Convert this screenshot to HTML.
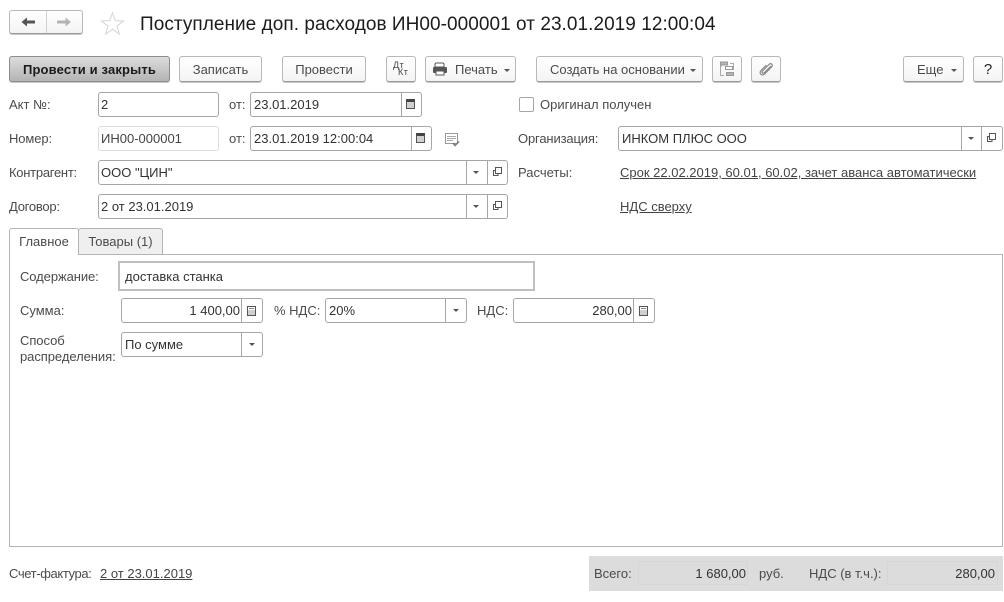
<!DOCTYPE html>
<html><head><meta charset="utf-8">
<style>
html,body{margin:0;padding:0;background:#fff;width:1004px;height:602px;overflow:hidden}
body{position:relative;font:13px/14px "Liberation Sans",Arial,sans-serif;color:#4b4b4b}
.a{position:absolute;white-space:nowrap}
.btn{position:absolute;box-sizing:border-box;top:56px;height:26px;border:1px solid #b8b8b8;border-bottom-color:#9a9a9a;border-radius:3px;background:linear-gradient(#fff,#f4f4f4);box-shadow:0 1px 0 #c8c8c8;text-align:center;line-height:26px;color:#4b4b4b;white-space:nowrap}
.f{position:absolute;box-sizing:border-box;height:25px;border:1px solid #a6a6a6;border-radius:3px;background:#fff;line-height:23px;padding-left:3px;color:#333;white-space:nowrap}
.d{position:absolute;top:0;bottom:0;width:1px;background:#a6a6a6}
.t{position:absolute;width:0;height:0;border-left:3px solid transparent;border-right:3px solid transparent;border-top:3px solid #555}
.l{color:#4b4b4b}
u{color:#444}
.cal{position:absolute;width:7px;height:6px;border:1px solid #555;border-top:3px solid #444;background-color:#fff;background-image:radial-gradient(#555 .6px,transparent .8px);background-size:2px 2px}
.calc{position:absolute;width:7px;height:8px;border:1px solid #555;background-color:#fff;background-image:linear-gradient(#fff 3px,transparent 3px),radial-gradient(#555 .6px,transparent .8px);background-size:100% 100%,2px 2px}
.calc:before{content:"";position:absolute;left:1px;right:1px;top:1px;height:1px;background:#888}
</style></head><body>

<!-- nav -->
<div class="btn" style="left:9px;top:10px;width:74px;height:24px"></div>
<div class="a" style="left:46px;top:11px;width:1px;height:22px;background:#d0d0d0"></div>
<svg class="a" style="left:20px;top:15px" width="60" height="14"><path d="M1.500 7 L7 2.500 V5.500 H15 V8.500 H7 V11.500Z" fill="#555"/><path d="M51 7 L45.500 2.500 V5.500 H37 V8.500 H45.500 V11.500Z" fill="#b4b4b4"/></svg>
<svg class="a" style="left:100px;top:11px" width="25" height="24"><path d="M12.500 2 L15.300 9.600 L23.500 10 L17 15 L19.300 23 L12.500 18.400 L5.700 23 L8 15 L1.500 10 L9.700 9.600Z" fill="#fff" stroke="#d4d4d4"/></svg>
<div class="a" style="left:140px;top:14px;font-size:19px;line-height:21px;letter-spacing:.05px;color:#1c1c1c">Поступление доп. расходов ИН00-000001 от 23.01.2019 12:00:04</div>

<!-- toolbar -->
<div class="btn" style="left:9px;width:161px;background:linear-gradient(#dcdcdc,#b4b4b4);border-color:#8c8c8c;color:#1a1a1a;font-weight:bold;letter-spacing:.15px">Провести и закрыть</div>
<div class="btn" style="left:179px;width:83px">Записать</div>
<div class="btn" style="left:282px;width:84px">Провести</div>
<div class="btn" style="left:386px;width:30px"></div>
<div class="a" style="left:393px;top:61px;font-size:9px;line-height:9px;letter-spacing:.5px;color:#444">Дт</div>
<div class="a" style="left:398px;top:68px;font-size:9px;line-height:9px;letter-spacing:.5px;color:#444">Кт</div>
<div class="btn" style="left:425px;width:91px;text-align:left;padding-left:29px">Печать</div>
<svg class="a" style="left:432px;top:62px" width="16" height="14"><path d="M4 1h7l1 1v3H3V2z" fill="#fff" stroke="#555"/><rect x="1" y="5" width="14" height="6" rx="1" fill="#555"/><rect x="4" y="9" width="8" height="4" fill="#fff" stroke="#555"/></svg>
<div class="t" style="left:504px;top:69px"></div>
<div class="btn" style="left:536px;width:167px;text-align:left;padding-left:13px">Создать на основании</div>
<div class="t" style="left:690px;top:69px"></div>
<div class="btn" style="left:712px;width:30px"></div>
<svg class="a" style="left:719px;top:61px" width="16" height="16" fill="none"><path d="M3 5H1.500V14.500H5M11 2.500H14.500V9" stroke="#aaa"/><rect x="1.500" y="1" width="7" height="3" fill="#b4b4b4" stroke="#999"/><rect x="6.500" y="5.500" width="7" height="3" fill="#fff" stroke="#999"/><rect x="7.500" y="11.500" width="7" height="3" fill="#b4b4b4" stroke="#999"/></svg>
<div class="btn" style="left:751px;width:30px"></div>
<svg class="a" style="left:758px;top:61px" width="16" height="16" fill="none"><path d="M13 5 L6.500 11.500 C5 13 3.200 11.500 4.500 10 L11 3.500 C13 1.500 15.500 3.800 13.500 6 L6.800 12.800 C4 15.500 0.500 12.500 3 9.500 L8.500 4" stroke="#888" stroke-width="1.200"/></svg>
<div class="btn" style="left:903px;width:61px;text-align:left;padding-left:13px">Еще</div>
<div class="t" style="left:951px;top:69px"></div>
<div class="btn" style="left:973px;width:30px;font-size:15px;color:#222">?</div>

<!-- row 1 -->
<div class="a l" style="left:9px;top:98px">Акт №:</div>
<div class="f" style="left:98px;top:92px;width:121px;padding-left:2px">2</div>
<div class="a l" style="left:229px;top:98px">от:</div>
<div class="f" style="left:250px;top:92px;width:172px">23.01.2019<span class="d" style="left:150px"></span><span class="cal" style="left:155px;top:6px"></span></div>
<div class="a" style="left:519px;top:97px;width:15px;height:15px;box-sizing:border-box;border:1px solid #a6a6a6;border-radius:2px"></div>
<div class="a l" style="left:540px;top:98px">Оригинал получен</div>

<!-- row 2 -->
<div class="a l" style="left:9px;top:132px;letter-spacing:-.1px">Номер:</div>
<div class="f" style="left:98px;top:126px;width:121px;border-color:#dcdcdc;color:#444;padding-left:2px">ИН00-000001</div>
<div class="a l" style="left:229px;top:132px">от:</div>
<div class="f" style="left:250px;top:126px;width:182px">23.01.2019 12:00:04<span class="d" style="left:160px"></span><span class="cal" style="left:165px;top:6px"></span></div>
<svg class="a" style="left:445px;top:133px" width="16" height="14" fill="none"><rect x="0.500" y="0.500" width="12" height="10" fill="#fff" stroke="#999"/><path d="M2 3.500h9M2 5.500h9M2 7.500h6" stroke="#aaa"/><path d="M8 10l2 2.500 4-4" stroke="#777" stroke-width="1.500"/></svg>
<div class="a l" style="left:518px;top:132px;letter-spacing:-.15px">Организация:</div>
<div class="f" style="left:618px;top:126px;width:385px">ИНКОМ ПЛЮС ООО<span class="d" style="left:342px"></span><span class="t" style="left:349px;top:10px"></span><span class="d" style="left:362px"></span>
<svg class="a" style="left:367px;top:5px" width="12" height="12" fill="none" stroke="#555"><rect x="3.500" y="1.500" width="6" height="6" fill="#fff"/><path d="M3.500 4.500H1.500V9.500H6V7.500"/></svg></div>

<!-- row 3 -->
<div class="a l" style="left:9px;top:166px;letter-spacing:-.27px">Контрагент:</div>
<div class="f" style="left:98px;top:160px;width:410px;padding-left:2px">ООО "ЦИН"<span class="d" style="left:367px"></span><span class="t" style="left:374px;top:10px"></span><span class="d" style="left:388px"></span>
<svg class="a" style="left:393px;top:5px" width="12" height="12" fill="none" stroke="#555"><rect x="3.500" y="1.500" width="6" height="6" fill="#fff"/><path d="M3.500 4.500H1.500V9.500H6V7.500"/></svg></div>
<div class="a l" style="left:518px;top:166px">Расчеты:</div>
<div class="a" style="left:620px;top:166px"><u>Срок 22.02.2019, 60.01, 60.02, зачет аванса автоматически</u></div>

<!-- row 4 -->
<div class="a l" style="left:9px;top:200px;letter-spacing:-.25px">Договор:</div>
<div class="f" style="left:98px;top:194px;width:410px;padding-left:2px">2 от 23.01.2019<span class="d" style="left:367px"></span><span class="t" style="left:374px;top:10px"></span><span class="d" style="left:388px"></span>
<svg class="a" style="left:393px;top:5px" width="12" height="12" fill="none" stroke="#555"><rect x="3.500" y="1.500" width="6" height="6" fill="#fff"/><path d="M3.500 4.500H1.500V9.500H6V7.500"/></svg></div>
<div class="a" style="left:620px;top:200px"><u>НДС сверху</u></div>

<!-- panel + tabs -->
<div class="a" style="left:9px;top:254px;width:994px;height:293px;box-sizing:border-box;border:1px solid #b4b4b4"></div>
<div class="a" style="left:78px;top:228px;width:85px;height:27px;box-sizing:border-box;border:1px solid #b4b4b4;border-radius:3px 3px 0 0;background:#efefef;text-align:center;line-height:26px">Товары (1)</div>
<div class="a" style="left:9px;top:228px;width:70px;height:27px;box-sizing:border-box;border:1px solid #b4b4b4;border-bottom:none;border-radius:3px 3px 0 0;background:#fff;text-align:center;line-height:26px">Главное</div>

<div class="a l" style="left:20px;top:270px;letter-spacing:-.08px">Содержание:</div>
<div class="a" style="left:118px;top:261px;width:417px;height:30px;box-sizing:border-box;border:2px solid #c0c0c0;line-height:27px;padding-left:5px;color:#333">доставка станка</div>

<div class="a l" style="left:20px;top:304px">Сумма:</div>
<div class="f" style="left:121px;top:298px;width:142px;text-align:right;padding:0 22px 0 0">1 400,00<span class="d" style="left:119px"></span><span class="calc" style="left:125px;top:7px"></span></div>
<div class="a l" style="left:274px;top:304px">% НДС:</div>
<div class="f" style="left:325px;top:298px;width:142px">20%<span class="d" style="left:119px"></span><span class="t" style="left:127px;top:10px"></span></div>
<div class="a l" style="left:477px;top:304px">НДС:</div>
<div class="f" style="left:513px;top:298px;width:142px;text-align:right;padding:0 22px 0 0">280,00<span class="d" style="left:119px"></span><span class="calc" style="left:125px;top:7px"></span></div>

<div class="a l" style="left:20px;top:333px;line-height:16px;letter-spacing:-.06px">Способ<br>распределения:</div>
<div class="f" style="left:121px;top:332px;width:142px">По сумме<span class="d" style="left:119px"></span><span class="t" style="left:127px;top:10px"></span></div>

<!-- footer -->
<div class="a l" style="left:9px;top:567px;letter-spacing:-.38px">Счет-фактура:</div>
<div class="a" style="left:100px;top:567px"><u>2 от 23.01.2019</u></div>
<div class="a" style="left:589px;top:556px;width:414px;height:35px;background:#dcdcdc"></div>
<div class="a" style="left:638px;top:561px;width:110px;height:24px;box-sizing:border-box;border:1px solid #d6d6d6"></div>
<div class="a" style="left:887px;top:561px;width:111px;height:24px;box-sizing:border-box;border:1px solid #d6d6d6"></div>
<div class="a l" style="left:594px;top:567px">Всего:</div>
<div class="a" style="left:638px;top:567px;width:108px;text-align:right;color:#333">1 680,00</div>
<div class="a l" style="left:759px;top:567px">руб.</div>
<div class="a l" style="left:809px;top:567px">НДС (в т.ч.):</div>
<div class="a" style="left:887px;top:567px;width:108px;text-align:right;color:#333">280,00</div>
</body></html>
